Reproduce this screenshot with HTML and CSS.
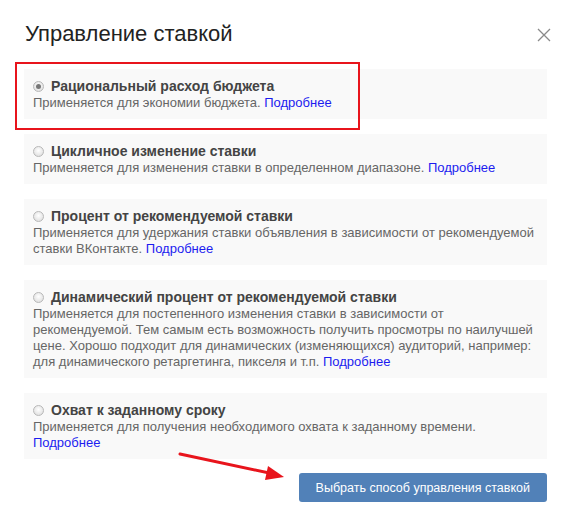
FILE: index.html
```html
<!DOCTYPE html>
<html lang="ru">
<head>
<meta charset="utf-8">
<title>Управление ставкой</title>
<link rel="stylesheet" href="styles.css">
</head>
<body>
<div class="modal">
  <div class="header">
    <h1 class="title">Управление ставкой</h1>
    <span class="close" aria-label="Закрыть">
      <svg width="14" height="14" viewBox="0 0 14 14"><path d="M1 1 L13 13 M13 1 L1 13" stroke="#8a8a8a" stroke-width="1.3" fill="none"/></svg>
    </span>
  </div>

  <div class="options">
    <div class="option">
      <div class="option-head"><span class="radio checked"></span><span class="option-title">Рациональный расход бюджета</span></div>
      <div class="option-desc">Применяется для экономии бюджета. <a class="more" href="#">Подробнее</a></div>
    </div>
    <div class="option">
      <div class="option-head"><span class="radio"></span><span class="option-title">Цикличное изменение ставки</span></div>
      <div class="option-desc">Применяется для изменения ставки в определенном диапазоне. <a class="more" href="#">Подробнее</a></div>
    </div>
    <div class="option">
      <div class="option-head"><span class="radio"></span><span class="option-title">Процент от рекомендуемой ставки</span></div>
      <div class="option-desc">Применяется для удержания ставки объявления в зависимости от рекомендуемой ставки ВКонтакте. <a class="more" href="#">Подробнее</a></div>
    </div>
    <div class="option">
      <div class="option-head"><span class="radio"></span><span class="option-title">Динамический процент от рекомендуемой ставки</span></div>
      <div class="option-desc">Применяется для постепенного изменения ставки в зависимости от рекомендуемой. Тем самым есть возможность получить просмотры по наилучшей цене. Хорошо подходит для динамических (изменяющихся) аудиторий, например: для динамического ретаргетинга, пикселя и т.п. <a class="more" href="#">Подробнее</a></div>
    </div>
    <div class="option">
      <div class="option-head"><span class="radio"></span><span class="option-title">Охват к заданному сроку</span></div>
      <div class="option-desc">Применяется для получения необходимого охвата к заданному времени. <a class="more" href="#">Подробнее</a></div>
    </div>
  </div>

  <div class="footer">
    <button class="btn" type="button">Выбрать способ управления ставкой</button>
  </div>

  <div class="highlight"></div>
  <svg class="arrow" width="120" height="36" viewBox="0 0 120 36">
    <path d="M2 4 L96 24" stroke="#e8141c" stroke-width="3" fill="none" stroke-linecap="round"/>
    <path d="M106 27 L90 16 L87 30 Z" fill="#e8141c"/>
  </svg>
</div>
</body>
</html>
```

FILE: styles.css
```css
* { box-sizing: border-box; }

html, body {
  margin: 0;
  padding: 0;
  background: #fff;
}

body {
  font-family: "Liberation Sans", Arial, sans-serif;
  color: #333;
}

.modal {
  position: relative;
  width: 567px;
  padding: 20px 20px 0 24px;
}

.header {
  display: flex;
  justify-content: space-between;
  align-items: center;
  height: 28px;
  margin: 0 -4px 21px 1px;
}

.title {
  margin: 0;
  font-size: 22px;
  font-weight: normal;
  line-height: 28px;
  color: #222;
}

.close {
  display: flex;
  width: 14px;
  height: 14px;
  margin-top: 2px;
}

.options {
  display: flex;
  flex-direction: column;
  gap: 15px;
}

.option {
  background: #f9f9f9;
  padding: 8px 8px 8px 9px;
}

.option-head {
  display: flex;
  align-items: center;
  gap: 7px;
  height: 18px;
}

.option-title {
  font-size: 14px;
  font-weight: bold;
  color: #444;
  line-height: 18px;
}

.radio {
  position: relative;
  width: 11px;
  height: 11px;
  border-radius: 50%;
  border: 1px solid #b8b8b8;
  background: radial-gradient(circle at 50% 40%, #ffffff 0%, #e4e4e4 70%, #d0d0d0 100%);
  flex: none;
}

.radio.checked::after {
  content: "";
  position: absolute;
  left: 2px;
  top: 2px;
  width: 5px;
  height: 5px;
  border-radius: 50%;
  background: #777;
}

.option-desc {
  font-size: 13px;
  line-height: 16px;
  color: #666;
}

.more {
  color: #1c1cf0;
  text-decoration: none;
}

.footer {
  display: flex;
  justify-content: flex-end;
  padding-top: 14px;
}

.btn {
  height: 29px;
  padding: 0 17px;
  border: 0;
  border-radius: 3px;
  background: #5181b8;
  color: #fff;
  font-family: "Liberation Sans", Arial, sans-serif;
  font-size: 12.5px;
}

.highlight {
  position: absolute;
  left: 15px;
  top: 62px;
  width: 345px;
  height: 68px;
  border: 2px solid #e8141c;
}

.arrow {
  position: absolute;
  left: 178px;
  top: 450px;
}
```
